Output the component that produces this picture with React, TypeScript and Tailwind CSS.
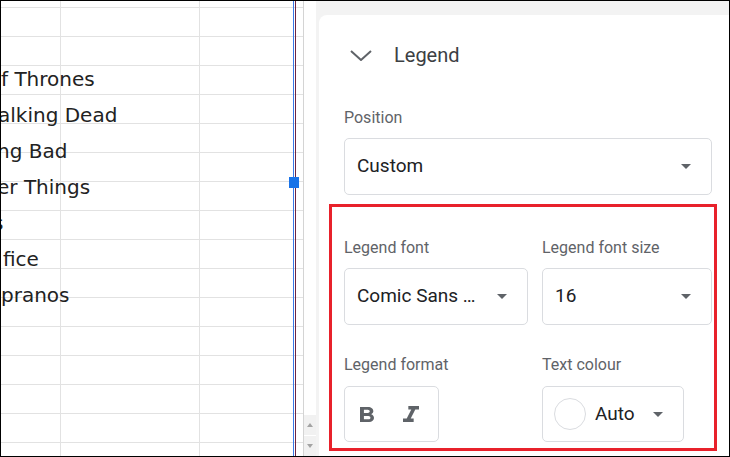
import { ReactNode } from 'react';

// Material "format_bold" / "format_italic" shapes, cropped to the glyph box
function BoldIcon() {
  return (
    <svg width="14" height="15" viewBox="7 4 10.75 14" preserveAspectRatio="none">
      <path
        fill="#5f6368"
        d="M15.6 10.79c.97-.67 1.65-1.77 1.65-2.79 0-2.26-1.75-4-4-4H7v14h7.04c2.09 0 3.710-1.7 3.71-3.79 0-1.52-.86-2.82-2.15-3.42zM10 6.5h3c.83 0 1.5.67 1.5 1.5s-.67 1.5-1.5 1.5h-3v-3zm3.5 9H10v-3h3.5c.83 0 1.5.67 1.5 1.5s-.67 1.5-1.5 1.5z"
      />
    </svg>
  );
}

function ItalicIcon() {
  return (
    <svg width="16" height="16" viewBox="6 4 12 14" preserveAspectRatio="none">
      <path fill="#5f6368" d="M10 4v3h2.21l-3.42 8H6v3h8v-3h-2.21l3.42-8H18V4z" />
    </svg>
  );
}

function Caret() {
  return (
    <svg width="10" height="5" viewBox="0 0 10 5" className="shrink-0">
      <path d="M0 0h10L5 5z" fill="#5f6368" />
    </svg>
  );
}

function Label({ children }: { children: ReactNode }) {
  return <div className="text-[16px] leading-[20px] text-[#5f6368] whitespace-nowrap">{children}</div>;
}

function SelectBox({ value, className }: { value: string; className: string }) {
  return (
    <div
      className={`flex items-center border border-[#dadce0] rounded-[5px] pl-[12px] pr-[20px] text-[19px] text-[#202124] ${className}`}
    >
      <span className="flex-1 whitespace-nowrap">{value}</span>
      <Caret />
    </div>
  );
}

const legendRows = [
  { text: 'f Thrones', shift: 'ml-0' },
  { text: 'alking Dead', shift: '-ml-[3px]' },
  { text: 'ng Bad', shift: '-ml-[4px]' },
  { text: 'er Things', shift: '-ml-[4px]' },
  { text: 's', shift: '-ml-[8px]' },
  { text: 'fice', shift: 'ml-[2px]' },
  { text: 'pranos', shift: 'ml-0' },
];

function SheetRow({ first }: { first?: boolean }) {
  return (
    <div className={`flex shrink-0 border-b border-[#e2e2e2] ${first ? 'h-[7px]' : 'h-[29px]'}`}>
      <div className="w-[60px] border-r border-[#e2e2e2]" />
      <div className="w-[139px] border-r border-[#e2e2e2]" />
      <div className="flex-1" />
    </div>
  );
}

export default function App() {
  return (
    <div className="w-[730px] h-[457px] border border-black flex overflow-hidden bg-white font-['Roboto',sans-serif]">
      {/* sheet */}
      <div className="relative w-[303px] h-full border-r border-[#d4d4d4] overflow-hidden shrink-0">
        <div className="flex flex-col">
          <SheetRow first />
          {Array.from({ length: 16 }).map((_, i) => (
            <SheetRow key={i} />
          ))}
        </div>

        {/* chart legend, drawn over the cells */}
        <div className="absolute left-0 top-[60px] flex flex-col font-['DejaVu_Sans',sans-serif] text-[20px] leading-[36px] text-[#222] whitespace-nowrap">
          {legendRows.map((r) => (
            <span key={r.text} className={r.shift}>
              {r.text}
            </span>
          ))}
        </div>

        {/* chart selection border + handle */}
        <div className="absolute top-0 bottom-0 left-[292px] w-px bg-[#3b78e7]" />
        <div className="absolute top-0 bottom-0 left-[294px] w-px bg-[#6d2446]" />
        <div className="absolute left-[288px] top-[176px] w-[10px] h-[11px] bg-[#1a73e8]" />
      </div>

      {/* scrollbar */}
      <div className="w-[12px] h-full flex flex-col justify-end shrink-0 bg-white">
        <div className="h-[20px] mb-px bg-[#f1f1f1] flex items-center justify-center">
          <svg width="6" height="4" viewBox="0 0 6 4">
            <path d="M0 4h6L3 0z" fill="#a3a3a3" />
          </svg>
        </div>
        <div className="h-[20px] bg-[#f1f1f1] flex items-center justify-center">
          <svg width="6" height="4" viewBox="0 0 6 4">
            <path d="M0 0h6L3 4z" fill="#a3a3a3" />
          </svg>
        </div>
      </div>

      {/* side panel */}
      <div className="flex-1 h-full bg-[#f3f3f3] pl-[3px] pt-[14px] flex">
        <div className="flex-1 bg-white rounded-tl-[8px] pl-[25px] flex flex-col">
          <div className="mt-[28px] h-[24px] flex items-center">
            <svg width="22" height="11" viewBox="0 0 22 11" className="ml-[6px]">
              <path d="M1 1l10 9 10-9" fill="none" stroke="#5f6368" strokeWidth="2" />
            </svg>
            <span className="ml-[22px] text-[20px] leading-[24px] text-[#3c4043]">Legend</span>
          </div>

          <div className="mt-[41px]">
            <Label>Position</Label>
          </div>
          <SelectBox value="Custom" className="mt-[10px] w-[368px] h-[57px]" />

          <div className="mt-[9px] -ml-[15px] w-[388px] border-[3px] border-[#e8212b] pt-[31px] pl-[12px] pr-[2px] pb-[6px]">
            <div className="grid grid-cols-[184px_170px] gap-x-[14px]">
              <div>
                <Label>Legend font</Label>
                <SelectBox value="Comic Sans …" className="mt-[10px] h-[57px]" />
              </div>
              <div>
                <Label>Legend font size</Label>
                <SelectBox value="16" className="mt-[10px] h-[57px]" />
              </div>
              <div className="mt-[30px]">
                <Label>Legend format</Label>
                <div className="mt-[11px] w-[95px] h-[56px] border border-[#dadce0] rounded-[5px] flex items-center pl-[15px]">
                  <BoldIcon />
                  <span className="ml-[29px] flex">
                    <ItalicIcon />
                  </span>
                </div>
              </div>
              <div className="mt-[30px]">
                <Label>Text colour</Label>
                <div className="mt-[11px] w-[142px] h-[56px] border border-[#dadce0] rounded-[5px] flex items-center pl-[11px] pr-[20px]">
                  <div className="w-[32px] h-[32px] rounded-full border border-[#dadce0] bg-white shrink-0" />
                  <span className="ml-[9px] flex-1 text-[19px] text-[#202124]">Auto</span>
                  <Caret />
                </div>
              </div>
            </div>
          </div>
        </div>
      </div>
    </div>
  );
}
